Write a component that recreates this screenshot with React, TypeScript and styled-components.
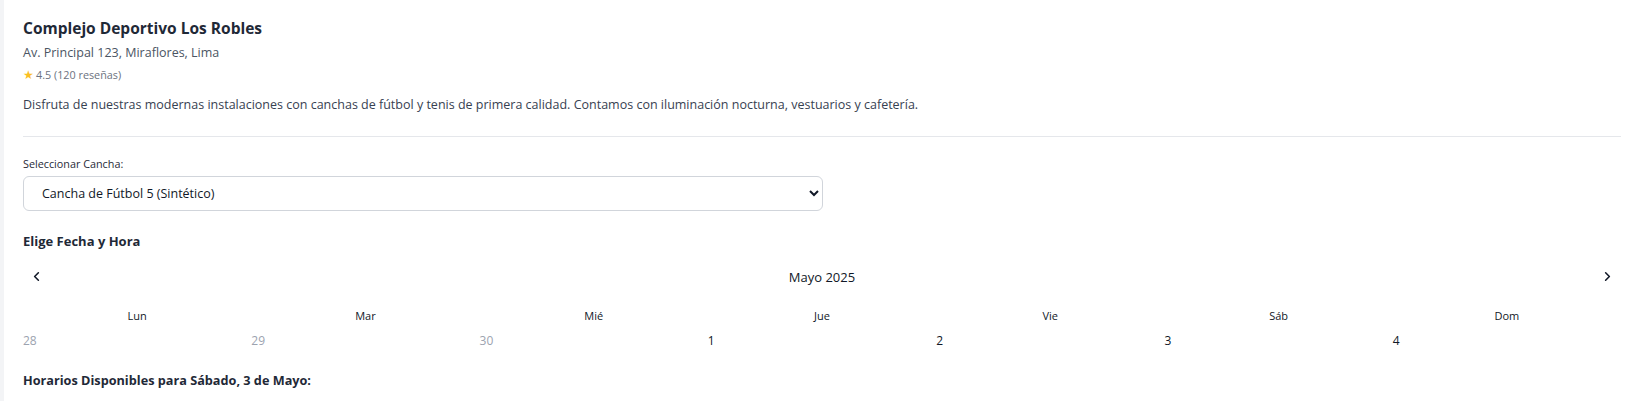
import React from 'react';
import styled, { createGlobalStyle } from 'styled-components';
import { ChevronLeft, ChevronRight } from 'lucide-react';

const GlobalStyle = createGlobalStyle`
  body {
    margin: 0;
    padding: 0;
    background-color: #ffffff;
    font-family: "Open Sans", "Noto Sans", Arial, sans-serif;
  }
`;

const Page = styled.div`
  display: flex;
  min-height: 401px;
  border-left: 4px solid #f3f4f6;
`;

const Card = styled.div`
  flex: 1;
  padding: 17px 7px 0 19px;
  background-color: white;
`;

const Title = styled.h1`
  margin: 0;
  font-size: 15.5px;
  line-height: 22px;
  font-weight: 700;
  color: #1f2937;
`;

const Address = styled.p`
  margin: 4px 0 0;
  font-size: 12.5px;
  line-height: 20px;
  color: #4b5563;
`;

const Rating = styled.div`
  display: flex;
  align-items: center;
  gap: 2px;
  margin-top: 4px;
  font-size: 10.8px;
  line-height: 16px;
  color: #6b7280;

  span:first-child {
    color: #fbbf24;
    font-size: 12px;
  }
`;

const Description = styled.p`
  margin: 12px 0 0;
  font-size: 12.5px;
  line-height: 20px;
  color: #374151;
`;

const Divider = styled.hr`
  margin: 21px 0 0;
  border: 0;
  border-top: 1px solid #e5e7eb;
`;

const Label = styled.label`
  display: block;
  margin-top: 19px;
  font-size: 10.8px;
  line-height: 16px;
  color: #1f2937;
`;

const Select = styled.select`
  display: block;
  width: 800px;
  height: 35px;
  margin-top: 4px;
  padding: 0 12px 0 14px;
  font-family: inherit;
  font-size: 12.5px;
  color: #111827;
  background-color: white;
  border: 1px solid #d1d5db;
  border-radius: 6px;
`;

const SectionTitle = styled.h2`
  margin: 20px 0 0;
  font-size: 13px;
  line-height: 20px;
  font-weight: 700;
  color: #1f2937;
`;

const MonthNav = styled.div`
  display: flex;
  justify-content: space-between;
  align-items: center;
  margin-top: 14px;
`;

const NavButton = styled.button`
  display: flex;
  align-items: center;
  justify-content: center;
  padding: 4px 6px;
  border: 0;
  background: none;
  color: #111827;
  cursor: pointer;
`;

const MonthLabel = styled.span`
  font-size: 13px;
  color: #111827;
`;

const WeekGrid = styled.div`
  display: grid;
  grid-template-columns: repeat(7, 1fr);
  margin-top: 20px;
`;

const DayName = styled.div`
  text-align: center;
  font-size: 11px;
  line-height: 16px;
  color: #111827;
`;

const DayGrid = styled.div`
  display: grid;
  grid-template-columns: repeat(7, 1fr);
  margin-top: 9px;
`;

const DayCell = styled.button<{ $muted?: boolean }>`
  padding: 0;
  border: 0;
  background: none;
  text-align: left;
  font-family: inherit;
  font-size: 12px;
  line-height: 16px;
  color: ${(p) => (p.$muted ? '#9ca3af' : '#111827')};
`;

const SlotsTitle = styled.h3`
  margin: 21px 0 0;
  font-size: 12.7px;
  line-height: 20px;
  font-weight: 700;
  color: #1f2937;
`;

const dayNames = ['Lun', 'Mar', 'Mié', 'Jue', 'Vie', 'Sáb', 'Dom'];
const days = [
  { n: 28, muted: true },
  { n: 29, muted: true },
  { n: 30, muted: true },
  { n: 1 },
  { n: 2 },
  { n: 3 },
  { n: 4 },
];

const App: React.FC = () => {
  return (
    <>
      <GlobalStyle />
      <Page>
        <Card>
          <Title>Complejo Deportivo Los Robles</Title>
          <Address>Av. Principal 123, Miraflores, Lima</Address>
          <Rating>
            <span>★</span>
            <span>4.5 (120 reseñas)</span>
          </Rating>
          <Description>
            Disfruta de nuestras modernas instalaciones con canchas de fútbol y tenis de primera calidad. Contamos con
            iluminación nocturna, vestuarios y cafetería.
          </Description>
          <Divider />

          <Label htmlFor="cancha">Seleccionar Cancha:</Label>
          <Select id="cancha" defaultValue="f5">
            <option value="f5">Cancha de Fútbol 5 (Sintético)</option>
            <option value="f7">Cancha de Fútbol 7</option>
            <option value="tenis">Cancha de Tenis</option>
          </Select>

          <SectionTitle>Elige Fecha y Hora</SectionTitle>
          <MonthNav>
            <NavButton aria-label="Mes anterior">
              <ChevronLeft size={15} strokeWidth={2.5} />
            </NavButton>
            <MonthLabel>Mayo 2025</MonthLabel>
            <NavButton aria-label="Mes siguiente">
              <ChevronRight size={15} strokeWidth={2.5} />
            </NavButton>
          </MonthNav>

          <WeekGrid>
            {dayNames.map((d) => (
              <DayName key={d}>{d}</DayName>
            ))}
          </WeekGrid>
          <DayGrid>
            {days.map((d) => (
              <DayCell key={d.n} $muted={d.muted}>
                {d.n}
              </DayCell>
            ))}
          </DayGrid>

          <SlotsTitle>Horarios Disponibles para Sábado, 3 de Mayo:</SlotsTitle>
        </Card>
      </Page>
    </>
  );
};

export default App;
